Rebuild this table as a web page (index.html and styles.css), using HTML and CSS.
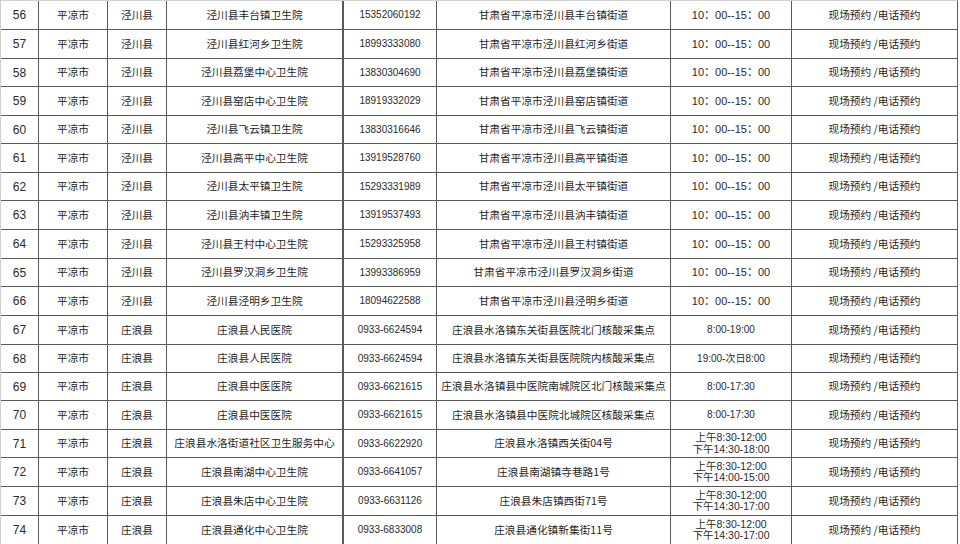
FILE: index.html
```html
<!DOCTYPE html>
<html lang="zh-CN">
<head>
<meta charset="utf-8">
<title>核酸采样点</title>
<link rel="stylesheet" href="styles.css">
</head>
<body>
<div class="sheet">
<div class="c no">56</div><div class="c">平凉市</div><div class="c">泾川县</div><div class="c">泾川县丰台镇卫生院</div><div class="c ph">15352060192</div><div class="c">甘肃省平凉市泾川县丰台镇街道</div><div class="c tm">10：00--15：00</div><div class="c">现场预约 /电话预约</div>
<div class="c no">57</div><div class="c">平凉市</div><div class="c">泾川县</div><div class="c">泾川县红河乡卫生院</div><div class="c ph">18993333080</div><div class="c">甘肃省平凉市泾川县红河乡街道</div><div class="c tm">10：00--15：00</div><div class="c">现场预约 /电话预约</div>
<div class="c no">58</div><div class="c">平凉市</div><div class="c">泾川县</div><div class="c">泾川县荔堡中心卫生院</div><div class="c ph">13830304690</div><div class="c">甘肃省平凉市泾川县荔堡镇街道</div><div class="c tm">10：00--15：00</div><div class="c">现场预约 /电话预约</div>
<div class="c no">59</div><div class="c">平凉市</div><div class="c">泾川县</div><div class="c">泾川县窑店中心卫生院</div><div class="c ph">18919332029</div><div class="c">甘肃省平凉市泾川县窑店镇街道</div><div class="c tm">10：00--15：00</div><div class="c">现场预约 /电话预约</div>
<div class="c no">60</div><div class="c">平凉市</div><div class="c">泾川县</div><div class="c">泾川县飞云镇卫生院</div><div class="c ph">13830316646</div><div class="c">甘肃省平凉市泾川县飞云镇街道</div><div class="c tm">10：00--15：00</div><div class="c">现场预约 /电话预约</div>
<div class="c no">61</div><div class="c">平凉市</div><div class="c">泾川县</div><div class="c">泾川县高平中心卫生院</div><div class="c ph">13919528760</div><div class="c">甘肃省平凉市泾川县高平镇街道</div><div class="c tm">10：00--15：00</div><div class="c">现场预约 /电话预约</div>
<div class="c no">62</div><div class="c">平凉市</div><div class="c">泾川县</div><div class="c">泾川县太平镇卫生院</div><div class="c ph">15293331989</div><div class="c">甘肃省平凉市泾川县太平镇街道</div><div class="c tm">10：00--15：00</div><div class="c">现场预约 /电话预约</div>
<div class="c no">63</div><div class="c">平凉市</div><div class="c">泾川县</div><div class="c">泾川县汭丰镇卫生院</div><div class="c ph">13919537493</div><div class="c">甘肃省平凉市泾川县汭丰镇街道</div><div class="c tm">10：00--15：00</div><div class="c">现场预约 /电话预约</div>
<div class="c no">64</div><div class="c">平凉市</div><div class="c">泾川县</div><div class="c">泾川县王村中心卫生院</div><div class="c ph">15293325958</div><div class="c">甘肃省平凉市泾川县王村镇街道</div><div class="c tm">10：00--15：00</div><div class="c">现场预约 /电话预约</div>
<div class="c no">65</div><div class="c">平凉市</div><div class="c">泾川县</div><div class="c">泾川县罗汉洞乡卫生院</div><div class="c ph">13993386959</div><div class="c">甘肃省平凉市泾川县罗汉洞乡街道</div><div class="c tm">10：00--15：00</div><div class="c">现场预约 /电话预约</div>
<div class="c no">66</div><div class="c">平凉市</div><div class="c">泾川县</div><div class="c">泾川县泾明乡卫生院</div><div class="c ph">18094622588</div><div class="c">甘肃省平凉市泾川县泾明乡街道</div><div class="c tm">10：00--15：00</div><div class="c">现场预约 /电话预约</div>
<div class="c no">67</div><div class="c">平凉市</div><div class="c">庄浪县</div><div class="c">庄浪县人民医院</div><div class="c ph">0933-6624594</div><div class="c">庄浪县水洛镇东关街县医院北门核酸采集点</div><div class="c ts">8:00-19:00</div><div class="c">现场预约 /电话预约</div>
<div class="c no">68</div><div class="c">平凉市</div><div class="c">庄浪县</div><div class="c">庄浪县人民医院</div><div class="c ph">0933-6624594</div><div class="c">庄浪县水洛镇东关街县医院院内核酸采集点</div><div class="c ts">19:00-次日8:00</div><div class="c">现场预约 /电话预约</div>
<div class="c no">69</div><div class="c">平凉市</div><div class="c">庄浪县</div><div class="c">庄浪县中医医院</div><div class="c ph">0933-6621615</div><div class="c">庄浪县水洛镇县中医院南城院区北门核酸采集点</div><div class="c ts">8:00-17:30</div><div class="c">现场预约 /电话预约</div>
<div class="c no">70</div><div class="c">平凉市</div><div class="c">庄浪县</div><div class="c">庄浪县中医医院</div><div class="c ph">0933-6621615</div><div class="c">庄浪县水洛镇县中医院北城院区核酸采集点</div><div class="c ts">8:00-17:30</div><div class="c">现场预约 /电话预约</div>
<div class="c no">71</div><div class="c">平凉市</div><div class="c">庄浪县</div><div class="c">庄浪县水洛街道社区卫生服务中心</div><div class="c ph">0933-6622920</div><div class="c">庄浪县水洛镇西关街04号</div><div class="c t2"><span>上午8:30-12:00</span><span>下午14:30-18:00</span></div><div class="c">现场预约 /电话预约</div>
<div class="c no">72</div><div class="c">平凉市</div><div class="c">庄浪县</div><div class="c">庄浪县南湖中心卫生院</div><div class="c ph">0933-6641057</div><div class="c">庄浪县南湖镇寺巷路1号</div><div class="c t2"><span>上午8:30-12:00</span><span>下午14:00-15:00</span></div><div class="c">现场预约 /电话预约</div>
<div class="c no">73</div><div class="c">平凉市</div><div class="c">庄浪县</div><div class="c">庄浪县朱店中心卫生院</div><div class="c ph">0933-6631126</div><div class="c">庄浪县朱店镇西街71号</div><div class="c t2"><span>上午8:30-12:00</span><span>下午14:30-17:00</span></div><div class="c">现场预约 /电话预约</div>
<div class="c no">74</div><div class="c">平凉市</div><div class="c">庄浪县</div><div class="c">庄浪县通化中心卫生院</div><div class="c ph">0933-6833008</div><div class="c">庄浪县通化镇新集街11号</div><div class="c t2"><span>上午8:30-12:00</span><span>下午14:30-17:00</span></div><div class="c">现场预约 /电话预约</div>
</div>
</body>
</html>
```
FILE: styles.css
```css
html, body {
  margin: 0;
  padding: 0;
  background: #ffffff;
  overflow: hidden;
}
body {
  width: 960px;
  height: 544px;
}
.sheet {
  display: grid;
  grid-template-columns: 37px 68px 58px 175px 93px 233px 120px 165px;
  grid-template-rows: 28px 28px 27px 28px 27px 28px 27px 28px 28px 27px 28px 28px 27px 27px 28px 27px 28px 28px 28px;
  gap: 1px;
  width: max-content;
  background: #5a5a5a;
  border-top: 1px solid #cfcfcf;
  border-left: 1px solid #cfcfcf;
  border-right: 1px solid #5a5a5a;
  font-family: "Noto Sans CJK SC", "Liberation Sans", sans-serif;
  font-size: 10.7px;
  color: #1e1e1e;
}
.c {
  background: #ffffff;
  display: flex;
  align-items: center;
  justify-content: center;
  white-space: nowrap;
  overflow: hidden;
  line-height: 1;
}
.no {
  font-family: "Liberation Sans", sans-serif;
  font-size: 12px;
  color: #2a2a2a;
}
.ph {
  border-left: 1px solid #5a5a5a;
  font-family: "Liberation Sans", sans-serif;
  font-size: 10px;
  color: #2a2a2a;
}
.tm {
  font-family: "Liberation Sans", "Noto Sans CJK SC", sans-serif;
  font-size: 11px;
  color: #2a2a2a;
}
.ts {
  font-family: "Liberation Sans", "Noto Sans CJK SC", sans-serif;
  font-size: 10px;
  color: #2a2a2a;
}
.t2 {
  flex-direction: column;
  font-family: "Liberation Sans", "Noto Sans CJK SC", sans-serif;
  font-size: 10.5px;
  line-height: 11.5px;
  color: #2a2a2a;
}
.t2 span {
  display: block;
}
```
